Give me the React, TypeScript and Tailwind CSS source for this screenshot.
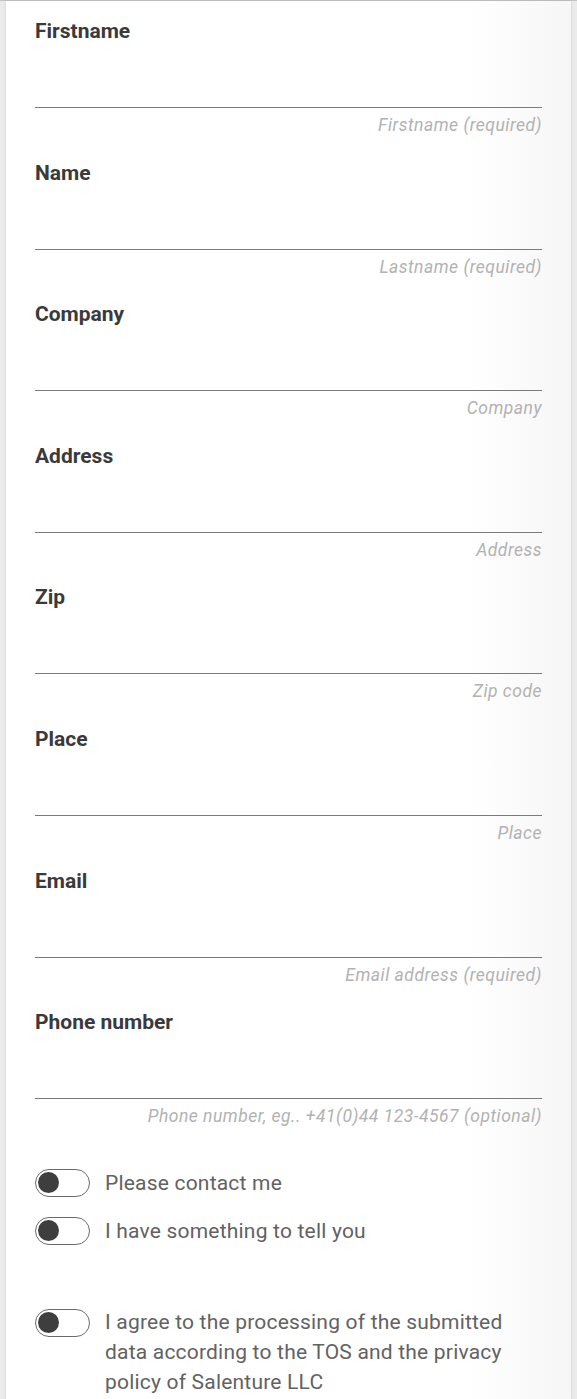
import React from 'react';

const fields = [
  { label: 'Firstname', hint: 'Firstname (required)' },
  { label: 'Name', hint: 'Lastname (required)' },
  { label: 'Company', hint: 'Company' },
  { label: 'Address', hint: 'Address' },
  { label: 'Zip', hint: 'Zip code' },
  { label: 'Place', hint: 'Place' },
  { label: 'Email', hint: 'Email address (required)' },
  { label: 'Phone number', hint: 'Phone number, eg.. +41(0)44 123-4567 (optional)' },
];

function Toggle() {
  return (
    <span className="flex h-[28px] w-[55px] shrink-0 items-center rounded-full border-[1.5px] border-[#6a6a6a] bg-white pl-[2px]">
      <span className="h-[21px] w-[21px] rounded-full bg-[#3e3e3e]" />
    </span>
  );
}

export default function App() {
  return (
    <div className="min-h-screen border-t border-[#c4c4c4] bg-[#ebebeb] px-[6px] font-['Roboto',sans-serif]">
      <div className="min-h-screen bg-gradient-to-r from-white from-[82%] to-[#f6f6f6] px-[29px] pt-[18px] shadow-[0_0_3px_rgba(0,0,0,0.12)]">
        <form className="flex flex-col">
          {fields.map((f) => (
            <div key={f.label} className="mb-[25.6px]">
              <label className="block text-[21px] font-bold leading-[24px] text-[#3a3a3a]">{f.label}</label>
              <div className="h-[64px]" />
              <div className="h-px bg-[#7a7a7a]" />
              <div className="mt-[7px] text-right text-[17.5px] italic leading-[20px] tracking-[0.5px] text-[#b2b2b2]">
                {f.hint}
              </div>
            </div>
          ))}

          {/* Toggles */}
          <div className="mt-[17px] flex flex-col gap-[20px]">
            <label className="flex items-center gap-[15px]">
              <Toggle />
              <span className="text-[21px] leading-[28px] tracking-[0.2px] text-[#626262]">Please contact me</span>
            </label>
            <label className="flex items-center gap-[15px]">
              <Toggle />
              <span className="text-[21px] leading-[28px] tracking-[0.2px] text-[#626262]">I have something to tell you</span>
            </label>
          </div>

          <label className="mt-[62px] flex items-start gap-[15px]">
            <span className="mt-[2px]">
              <Toggle />
            </span>
            <span className="text-[21px] leading-[30px] tracking-[0.2px] text-[#626262]">
              I agree to the processing of the submitted data according to the TOS and the privacy policy of Salenture LLC
            </span>
          </label>
        </form>
      </div>
    </div>
  );
}
